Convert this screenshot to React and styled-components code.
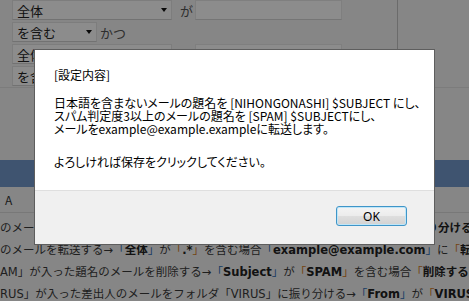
import React from "react";
import styled, { createGlobalStyle } from "styled-components";

const GlobalStyle = createGlobalStyle`
  html, body { margin: 0; padding: 0; }
  body {
    background: #f4f4f4;
    font-family: "Noto Sans CJK JP", "Noto Sans", sans-serif;
    overflow: hidden;
  }
`;

// 背景のフィルタ設定ページ
const Page = styled.div`
  width: 469px;
  height: 301px;
  overflow: hidden;
  background: #f4f4f4;
  color: #333;
`;

const FilterTable = styled.div`
  display: grid;
  grid-template-columns: 398px 1fr;
  height: 87px;
  border-bottom: 1px solid #e2e2e2;
`;

const FilterCell = styled.div`
  display: flex;
  flex-direction: column;
  gap: 2px;
  padding-left: 12px;
  border-right: 1px solid #c4c4c4;
`;

const FilterRow = styled.div`
  display: flex;
  align-items: center;
  height: 20px;
`;

const Select = styled.div`
  box-sizing: border-box;
  width: ${(p) => p.$w}px;
  height: 20px;
  display: flex;
  align-items: center;
  justify-content: space-between;
  padding: 0 4px 0 4px;
  background: #fff;
  border: 1px solid #e4e4e4;
  border-bottom-color: #d0d0d0;
  font-size: 13px;
  color: #222;
`;

const Arrow = styled.span`
  width: 0;
  height: 0;
  border-left: 3px solid transparent;
  border-right: 3px solid transparent;
  border-top: 4px solid #111;
`;

const Joint = styled.span`
  font-size: 13px;
  color: #555;
  margin: 0 ${(p) => p.$mr || 3}px 0 ${(p) => p.$ml || 3}px;
`;

const TextBox = styled.div`
  box-sizing: border-box;
  width: 147px;
  height: 20px;
  background: #fff;
  border: 1px solid #e8e8e8;
  border-bottom-color: #d6d6d6;
`;

const Spacer = styled.div`
  height: 72px;
`;

const HeadBar = styled.div`
  height: 27px;
  background: #7399cc;
`;

const ColumnHead = styled.div`
  height: 25px;
  display: flex;
  align-items: center;
  padding-left: 5px;
  font-size: 12px;
  color: #333;
  border-bottom: 1px solid #dadada;
`;

const ExampleList = styled.div`
  padding-top: 3px;
`;

const ExampleRow = styled.div`
  height: 22px;
  line-height: 22px;
  font-family: "DejaVu Sans", "Noto Sans CJK JP", sans-serif;
  font-size: 11.5px;
  white-space: nowrap;
  color: #3a3a3a;
`;

const Br = styled.span`
  font-family: "Noto Sans CJK JP", sans-serif;
  color: ${(p) => (p.$tone === "o" ? "#d27a1e" : "#2f6db5")};
`;

const Em = styled.b`
  font-weight: 700;
  color: #222;
`;

// ダイアログ
const Overlay = styled.div`
  position: fixed;
  inset: 0;
  background: rgba(0, 0, 0, 0.45);
`;

const Dialog = styled.div`
  position: fixed;
  left: 34px;
  top: 49px;
  width: 401px;
  height: 196px;
  box-sizing: border-box;
  border: 1px solid #5e5e5e;
  background: #fff;
  display: flex;
  flex-direction: column;
`;

const DialogBody = styled.div`
  flex: 1;
  padding: 18px 19px 0;
  font-size: 12px;
  line-height: 13px;
  color: #000;
  font-feature-settings: "palt";
  white-space: nowrap;
`;

const Para = styled.p`
  margin: 0 0 ${(p) => p.$mb || 0}px;
`;

const DialogFooter = styled.div`
  height: 54px;
  box-sizing: border-box;
  border-top: 1px solid #dfdfdf;
  background: #f0f0f0;
  display: flex;
  justify-content: flex-end;
  align-items: flex-start;
  padding: 15px 27px 0 0;
`;

const OkButton = styled.button`
  box-sizing: border-box;
  width: 71px;
  height: 20px;
  padding: 0;
  border: 1px solid #3f95c8;
  border-radius: 3px;
  background: linear-gradient(#f4f4f4 0%, #ececec 48%, #dedede 52%, #d2d2d2 100%);
  box-shadow: inset 0 0 0 1px #bfe6f8;
  font-family: "Noto Sans", "Noto Sans CJK JP", sans-serif;
  font-size: 12px;
  color: #000;
`;

export default function App() {
  return (
    <>
      <GlobalStyle />
      <Page>
        <FilterTable>
          <FilterCell>
            <FilterRow>
              <Select $w={160}>全体<Arrow /></Select>
              <Joint $ml={8} $mr={2}>が</Joint>
              <TextBox />
            </FilterRow>
            <FilterRow>
              <Select $w={85}>を含む<Arrow /></Select>
              <Joint>かつ</Joint>
            </FilterRow>
            <FilterRow>
              <Select $w={160}>全体<Arrow /></Select>
              <Joint $ml={8} $mr={2}>が</Joint>
              <TextBox />
            </FilterRow>
            <FilterRow>
              <Select $w={85}>を含む<Arrow /></Select>
              <Joint>かつ</Joint>
            </FilterRow>
          </FilterCell>
          <div />
        </FilterTable>
        <Spacer />
        <HeadBar />
        <ColumnHead>A</ColumnHead>
        <ExampleList>
          <ExampleRow>
            のメールをフォルダに振り分ける→<Br>「</Br><Em>Subject</Em><Br>」</Br>が<Br $tone="o">「</Br><Em>メールマガ</Em><Br $tone="o">」</Br>を含む場合<Br>「</Br><Em>振り分ける</Em>
          </ExampleRow>
          <ExampleRow>
            のメールを転送する→<Br>「</Br><Em>全体</Em><Br>」</Br>が<Br $tone="o">「</Br><Em>.*</Em><Br $tone="o">」</Br>を含む場合<Br>「</Br><Em>example@example.com</Em><Br>」</Br>に<Br $tone="o">「</Br><Em>転送</Em>
          </ExampleRow>
          <ExampleRow>
            AM」が入った題名のメールを削除する→<Br>「</Br><Em>Subject</Em><Br>」</Br>が<Br $tone="o">「</Br><Em>SPAM</Em><Br $tone="o">」</Br>を含む場合<Br $tone="o">「</Br><Em>削除する</Em>
          </ExampleRow>
          <ExampleRow>
            RUS」が入った差出人のメールをフォルダ「VIRUS」に振り分ける→<Br>「</Br><Em>From</Em><Br>」</Br>が<Br $tone="o">「</Br><Em>VIRUS</Em>
          </ExampleRow>
        </ExampleList>
      </Page>
      <Overlay />
      <Dialog>
        <DialogBody>
          <Para $mb={15}>[設定内容]</Para>
          <Para $mb={20}>
            日本語を含まないメールの題名を [NIHONGONASHI] $SUBJECT にし、<br />
            スパム判定度3以上のメールの題名を [SPAM] $SUBJECTにし、<br />
            メールをexample@example.exampleに転送します。
          </Para>
          <Para>よろしければ保存をクリックしてください。</Para>
        </DialogBody>
        <DialogFooter>
          <OkButton>OK</OkButton>
        </DialogFooter>
      </Dialog>
    </>
  );
}
